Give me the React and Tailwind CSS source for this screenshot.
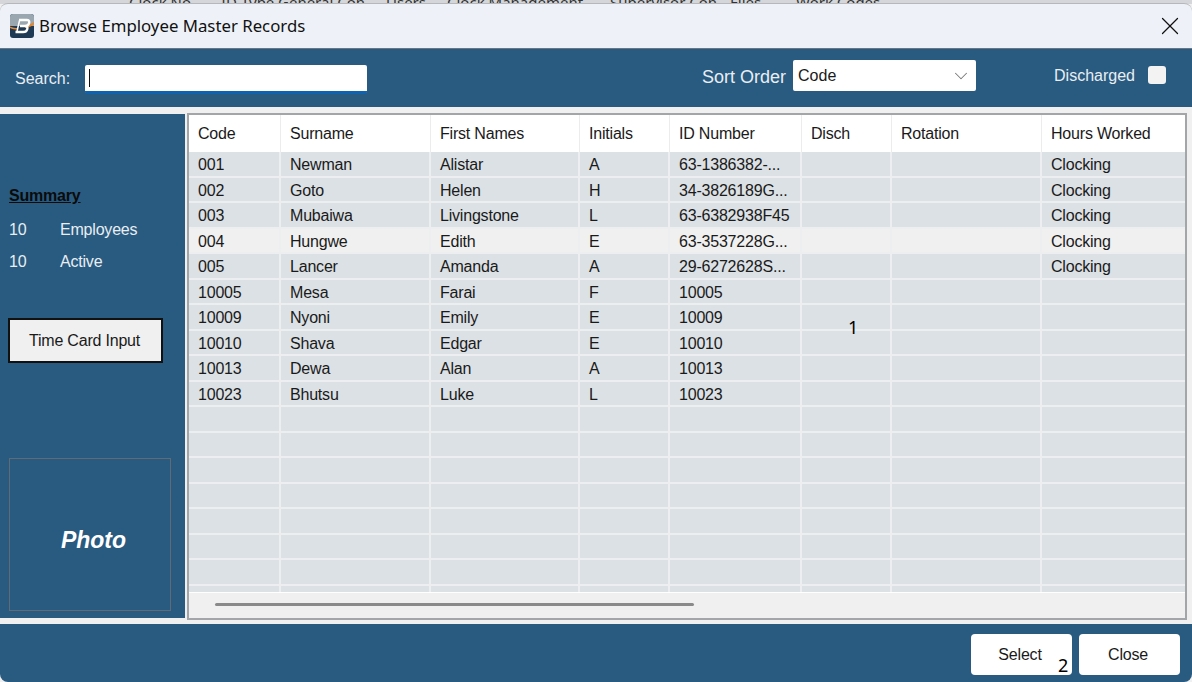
import { X, ChevronDown } from 'lucide-react'

const cols = [
  { label: 'Code', w: 'w-[92px]' },
  { label: 'Surname', w: 'w-[150px]' },
  { label: 'First Names', w: 'w-[149px]' },
  { label: 'Initials', w: 'w-[90px]' },
  { label: 'ID Number', w: 'w-[132px]' },
  { label: 'Disch', w: 'w-[90px]' },
  { label: 'Rotation', w: 'w-[150px]' },
  { label: 'Hours Worked', w: 'w-[145px]' },
]

const tabs = [
  { label: 'Clock No', w: 'w-[92px]' },
  { label: 'ID Type', w: 'w-[57px]' },
  { label: 'General Con', w: 'w-[108px]' },
  { label: 'Users', w: 'w-[61px]' },
  { label: 'Clock Management', w: 'w-[163px]' },
  { label: 'Supervisor Con', w: 'w-[120px]' },
  { label: 'Files', w: 'w-[66px]' },
  { label: 'Work Codes', w: 'w-[100px]' },
]

const rows = [
  ['001', 'Newman', 'Alistar', 'A', '63-1386382-...', '', '', 'Clocking'],
  ['002', 'Goto', 'Helen', 'H', '34-3826189G...', '', '', 'Clocking'],
  ['003', 'Mubaiwa', 'Livingstone', 'L', '63-6382938F45', '', '', 'Clocking'],
  ['004', 'Hungwe', 'Edith', 'E', '63-3537228G...', '', '', 'Clocking'],
  ['005', 'Lancer', 'Amanda', 'A', '29-6272628S...', '', '', 'Clocking'],
  ['10005', 'Mesa', 'Farai', 'F', '10005', '', '', ''],
  ['10009', 'Nyoni', 'Emily', 'E', '10009', '', '', ''],
  ['10010', 'Shava', 'Edgar', 'E', '10010', '', '', ''],
  ['10013', 'Dewa', 'Alan', 'A', '10013', '', '', ''],
  ['10023', 'Bhutsu', 'Luke', 'L', '10023', '', '', ''],
  ...Array.from({ length: 8 }, () => ['', '', '', '', '', '', '', '']),
]

function Logo() {
  return (
    <svg width="24" height="24" viewBox="0 0 24 24" className="shrink-0">
      <rect width="24" height="24" rx="3" fill="#1f3a55" />
      <path d="M0 3a3 3 0 0 1 3-3h18a3 3 0 0 1 3 3v9H0z" fill="#9aa7b1" />
      <path d="M0 12.500c3 1 5 1.500 8 1.500v1.500c-3 0-6-.5-8-1.500z" fill="#e8862a" />
      <path d="M15 12c3-.5 6-2 9-4v2.500c-3 2-6 3.500-9 3.500z" fill="#e8862a" />
      <path d="M9 6h8c2.500 0 2.500 2 2 3.500c-.5 1.300-1.800 2.500-4 2.500h-5M15 12c2.500 0 2.700 1.800 2.200 3.300c-.6 1.900-2 2.700-4 2.700H5.500" fill="none" stroke="#fff" strokeWidth="2.400" />
      <path d="M9.500 6.500L7 17.500" fill="none" stroke="#fff" strokeWidth="1.500" />
    </svg>
  )
}

export default function App() {
  return (
    <div className="w-[1192px] h-[682px] overflow-hidden flex flex-col bg-[#f0f0f0] font-['Liberation_Sans',sans-serif] text-[16px] tracking-[-0.2px] relative">
      <div className="h-[4px] shrink-0 bg-[#d4d6d9] flex pl-[129px] font-['Noto_Sans',sans-serif] text-[15px] tracking-normal text-[#333] leading-[4px] overflow-hidden">
        {tabs.map((t) => (
          <span key={t.label} className={`${t.w} shrink-0 whitespace-nowrap`}>{t.label}</span>
        ))}
      </div>

      <div className="h-[45px] shrink-0 bg-[#eef2f8] rounded-t-[8px] border-t border-[#b5b7ba] flex items-center pl-[10px] pr-[7px] -mt-px">
        <Logo />
        <span className="ml-[5px] font-['Noto_Sans',sans-serif] text-[16.8px] tracking-normal text-[#111]">Browse Employee Master Records</span>
        <X className="ml-auto w-[30px] h-[30px] text-[#111]" strokeWidth={1} />
      </div>

      <div className="h-[59px] shrink-0 bg-[#295a7f] border-t border-[#6b7680] flex items-center tracking-normal text-[#e8eef3]">
        <span className="ml-[15px] w-[70px] mt-[2px]">Search:</span>
        <div className="w-[282px] h-[29px] mt-[3px] bg-white rounded-[2px] border-b-[3px] border-[#0f62ae] flex items-center pl-[4px]">
          <div className="w-px h-[18px] bg-[#111]" />
        </div>
        <span className="ml-[335px] -mt-[2px] text-[18px]">Sort Order</span>
        <div className="ml-[7px] -mt-[5px] w-[183px] h-[31px] bg-white rounded-[2px] flex items-center pl-[5px] pr-[4px] text-[#1a1a1a]">
          Code
          <ChevronDown className="ml-auto w-[22px] h-[22px] text-[#777]" strokeWidth={1.1} />
        </div>
        <span className="ml-[78px] -mt-[5px]">Discharged</span>
        <div className="ml-[13px] -mt-[6px] w-[18px] h-[18px] bg-[#f3f3f3] rounded-[3px]" />
      </div>

      <div className="flex-1 min-h-0 flex pt-[6px] pb-[4px]">
        <div className="w-[185px] shrink-0 mt-px mb-[2px] bg-[#295a7f] flex flex-col pl-[9px] text-[#e8eef3]">
          <span className="mt-[70px] font-bold underline text-[#0b0b0b]">Summary</span>
          <div className="mt-[10px] flex">
            <span className="w-[51px]">10</span>
            <span>Employees</span>
          </div>
          <div className="mt-[8px] flex">
            <span className="w-[51px]">10</span>
            <span>Active</span>
          </div>
          <div className="mt-[44px] -ml-px w-[155px] h-[45px] bg-[#f0f0f0] border-2 border-[#111] flex items-center justify-center pr-[2px] text-[#1a1a1a]">
            Time Card Input
          </div>
          <div className="mt-[95px] w-[162px] h-[153px] border border-[#5f6b75] flex items-center justify-center pl-[7px] pt-[12px] italic font-bold tracking-normal text-white text-[23px]">
            Photo
          </div>
        </div>

        <div className="ml-[2px] w-[1000px] border-2 border-[#a3a6a9] bg-[#f0f0f0] flex flex-col overflow-hidden mr-[5px]">
          <div className="flex h-[37px] shrink-0 bg-white">
            {cols.map((c) => (
              <div key={c.label} className={`${c.w} shrink-0 pl-[9px] border-r border-[#ececec] flex items-center text-[#1a1a1a]`}>
                {c.label}
              </div>
            ))}
          </div>
          <div className="h-[440px] shrink-0 overflow-hidden">
            {rows.map((row, i) => (
              <div key={i} className={`flex h-[25.5px] border-b-2 border-[#eceef0] ${i === 3 ? 'bg-[#f0f0f0]' : 'bg-[#dce1e5]'}`}>
                {row.map((cell, j) => (
                  <div key={j} className={`${cols[j].w} shrink-0 pl-[9px] pt-[3px] border-r-2 border-[#eceef0] flex items-center text-[#1a1a1a]`}>
                    {cell}
                  </div>
                ))}
              </div>
            ))}
          </div>
          <div className="flex-1 bg-[#f0f0f0] border-t border-white pl-[26px] pt-[10px]">
            <div className="w-[479px] h-[3px] rounded-full bg-[#8a8a8a]" />
          </div>
        </div>
      </div>

      <div className="h-[58px] shrink-0 bg-[#295a7f] rounded-b-[8px] flex items-start justify-end gap-[7px] pr-[12px] pt-[10px] text-[#1a1a1a]">
        <div className="w-[101px] h-[41px] bg-white rounded-[4px] flex items-center justify-center pr-[3px]">Select</div>
        <div className="w-[101px] h-[41px] bg-white rounded-[4px] flex items-center justify-center pr-[3px]">Close</div>
      </div>

      <span className="absolute left-[848px] top-[314px] font-['Noto_Sans',sans-serif] text-[18px] text-black">1</span>
      <span className="absolute left-[1058px] top-[652px] font-['Noto_Sans',sans-serif] text-[18px] text-black">2</span>
    </div>
  )
}
